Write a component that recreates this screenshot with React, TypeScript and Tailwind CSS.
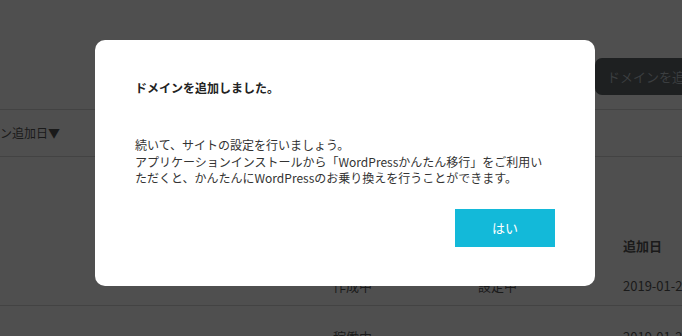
export default function App() {
  const font = { fontFamily: '"Noto Sans CJK JP", "Noto Sans", sans-serif' };
  return (
    <div className="relative w-[682px] h-[336px] overflow-hidden bg-[#4f4f4f] text-[#1a1a1a]" style={font}>
      {/* background page (dimmed) */}
      <div className="flex flex-col">
        <div className="h-[109px] flex items-start justify-end pt-[58px]">
          <div className="h-[37px] w-[140px] -mr-[53px] shrink-0 rounded-[7px] bg-[#1e2021] text-[#3b3e40] text-[13px] flex items-center pl-[12px] whitespace-nowrap">
            ドメインを追加
          </div>
        </div>
        <div className="h-[48px] border-t border-b border-[#434343] flex items-center">
          <span className="-ml-[36px] shrink-0 text-[12px] whitespace-nowrap text-[#1a1a1a]">ドメイン追加日▼</span>
        </div>
        <div className="h-[149px] border-b border-[#434343] flex flex-col">
          <div className="h-[109px] shrink-0 pl-[623px] pt-[79px] text-[13px] font-bold whitespace-nowrap leading-[20px]">追加日</div>
          <div className="flex items-center h-[39px] shrink-0 text-[13px] whitespace-nowrap">
            <span className="w-[333px] shrink-0" />
            <span className="w-[145px] shrink-0">作成中</span>
            <span className="w-[145px] shrink-0">設定中</span>
            <span className="shrink-0">2019-01-21</span>
          </div>
        </div>
        <div className="flex items-center h-[62px] text-[13px] whitespace-nowrap">
          <span className="w-[333px] shrink-0" />
          <span className="w-[145px] shrink-0">稼働中</span>
          <span className="w-[145px] shrink-0">-</span>
          <span className="shrink-0">2019-01-21</span>
        </div>
      </div>

      {/* modal */}
      <div className="absolute left-[95px] top-[40px] w-[500px] h-[246px] bg-white rounded-[10px] px-[40px] pt-[40px] flex flex-col">
        <div className="text-[12px] font-bold leading-[16px] text-[#222]">ドメインを追加しました。</div>
        <div className="mt-[41px] text-[12px] leading-[16.5px] text-[#333] whitespace-nowrap">
          続いて、サイトの設定を行いましょう。
          <br />
          アプリケーションインストールから「WordPressかんたん移行」をご利用い
          <br />
          ただくと、かんたんにWordPressのお乗り換えを行うことができます。
        </div>
        <div className="mt-[22px] flex justify-end">
          <button className="w-[100px] h-[38px] bg-[#13b9d9] text-white text-[13px] flex items-center justify-center">
            はい
          </button>
        </div>
      </div>
    </div>
  );
}
